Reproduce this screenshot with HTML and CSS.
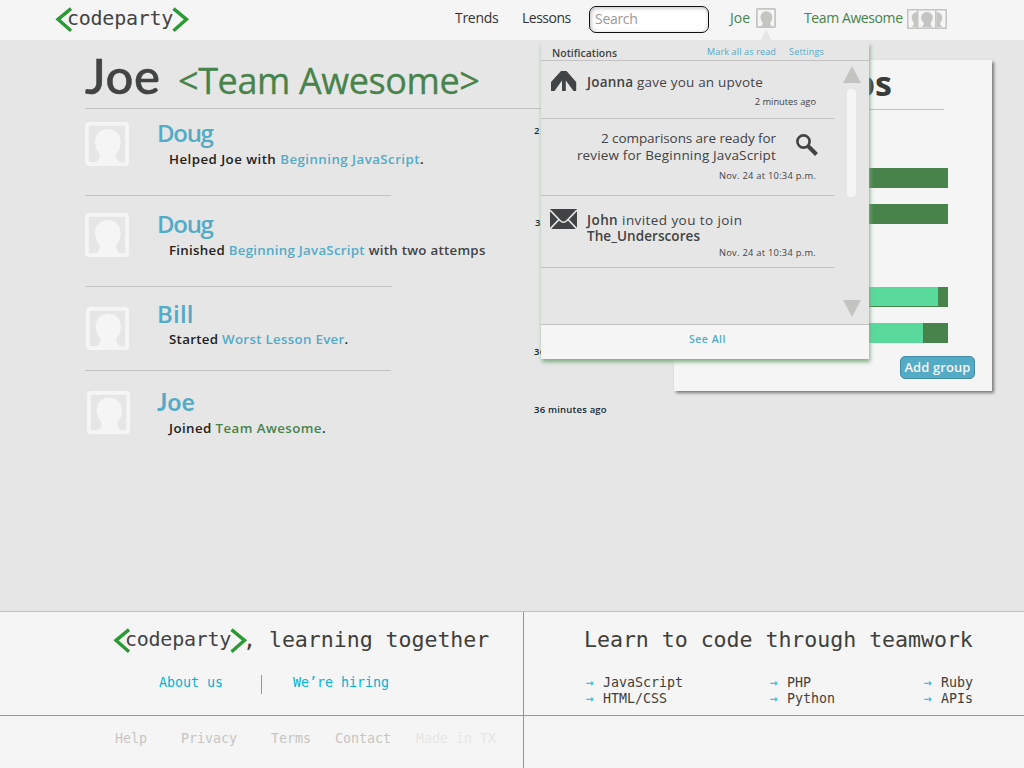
FILE: index.html
```html
<!DOCTYPE html>
<html lang="en">
<head>
<meta charset="utf-8">
<title>codeparty</title>
<link rel="stylesheet" href="styles.css">
</head>
<body>
<svg class="defs" width="0" height="0">
  <symbol id="logo" viewBox="0 0 137 28">
    <path d="M18 3.6 5 14.400 18 25.800M120.500 3.600 133.500 14.400 120.500 25.800" fill="none" stroke="#2b9a35" stroke-width="3.4"/>
  </symbol>
  <symbol id="person" viewBox="0 0 44 44">
    <rect x="1.900" y="1.900" width="40.200" height="40.200" rx="2" fill="none" stroke="currentColor" stroke-width="3.800"/>
    <path d="M22.500 7C29 7 34 11 35 16C36 19 36 22 35 24C35 27 34 28.500 32.500 30C31 32 30.500 34 31.500 36C32.500 38.500 34 39.500 36 41H9C12 39.500 13.500 38.500 14.500 36C15.300 34 14.500 31.500 13 29.500C11.500 28 11 26.500 11 24C9.500 22 9.800 19 10.500 16C12 11 16.500 7 22.500 7Z" fill="currentColor"/>
  </symbol>
</svg>

<header class="topbar">
  <div class="logo"><svg class="logo-marks"><use href="#logo"/></svg><span class="logo-word">codeparty</span></div>
  <nav class="nav">
    <a class="nav-link trends">Trends</a>
    <a class="nav-link lessons">Lessons</a>
    <input class="search" placeholder="Search">
    <a class="nav-link user">Joe</a>
    <svg class="user-icon"><use href="#person"/></svg>
    <a class="nav-link team">Team Awesome</a>
    <svg class="team-icon" viewBox="0 0 40 20">
      <g fill="none" stroke="#c4c4c2" stroke-width="1.500"><path d="M11 .8H.8V19.200H11M29 .8H39.200V19.200H29"/><rect x="10.800" y=".8" width="18" height="18.400"/></g>
      <g fill="#c4c4c2"><path d="M10 3C6.500 3.500 4.500 6 4.700 9 5 12 7 13 7 15L5 18H10Z"/><path d="M29.500 3C33 3.500 35.500 6 35.300 9 35 12 33 13 33 15L35 18H29.500Z"/><path d="M20 3C24 3 26 6 25.800 9.500 25.500 12 23.500 13 23.500 15L25 18H15L17 15C17 13 14.500 12 14.200 9.500 14 6 16 3 20 3Z"/></g>
    </svg>
  </nav>
</header>

<main class="main">
  <section class="feed">
    <h1 class="title"><span class="title-name">Joe</span><span class="title-team">&lt;Team Awesome&gt;</span></h1>
    <article class="entry e1">
      <svg class="avatar"><use href="#person"/></svg>
      <div class="entry-body"><h2 class="name">Doug</h2><p class="what w1">Helped Joe with <a>Beginning JavaScript</a>.</p></div>
      <time class="when">2 minutes ago</time>
    </article>
    <article class="entry e2">
      <svg class="avatar"><use href="#person"/></svg>
      <div class="entry-body"><h2 class="name">Doug</h2><p class="what w2">Finished <a>Beginning JavaScript</a> <span class="soft">with two attemps</span></p></div>
      <time class="when">3 minutes ago</time>
    </article>
    <article class="entry e3">
      <svg class="avatar"><use href="#person"/></svg>
      <div class="entry-body"><h2 class="name">Bill</h2><p class="what w3">Started <a>Worst Lesson Ever</a>.</p></div>
      <time class="when">36 minutes ago</time>
    </article>
    <article class="entry e4">
      <svg class="avatar"><use href="#person"/></svg>
      <div class="entry-body"><h2 class="name">Joe</h2><p class="what w4">Joined <a class="green">Team Awesome</a>.</p></div>
      <time class="when">36 minutes ago</time>
    </article>
  </section>

  <aside class="card">
    <h2 class="card-title">Groups</h2>
    <div class="bar b1"></div>
    <div class="bar b2"></div>
    <div class="bar b3"><div class="fill f3"></div></div>
    <div class="bar b4"><div class="fill f4"></div></div>
    <button class="add">Add group</button>
  </aside>
</main>

<section class="popup">
  <header class="popup-head"><b class="popup-title">Notifications</b><a class="mark">Mark all as read</a><a class="settings">Settings</a></header>
  <div class="popup-body">
    <div class="notes">
      <div class="note n1">
        <svg class="note-icon" width="26" height="20" viewBox="0 0 26 20"><path d="M10 0H15.500L25.200 11V20H22.500L14.800 9.500V20H11V9.500L3.500 20H0V11Z" fill="#424344"/></svg>
        <div class="note-text"><p class="t1"><b>Joanna</b> gave you an upvote</p><time>2 minutes ago</time></div>
      </div>
      <div class="note n2">
        <div class="note-text"><p class="t2">2 comparisons are ready for</p><p class="t3">review for Beginning JavaScript</p><time>Nov. 24 at 10:34 p.m.</time></div>
        <svg class="glass" width="24" height="24" viewBox="0 0 24 24"><g fill="none" stroke="#424344"><circle cx="8.500" cy="8.500" r="6.100" stroke-width="2.600"/><path d="M13 13 21.500 21.500" stroke-width="4"/></g></svg>
      </div>
      <div class="note n3">
        <svg class="note-icon" width="27" height="20" viewBox="0 0 27 20"><path d="M0 0H27V20H0Z" fill="#424344"/><path d="M0 1 10 11.500Q13.500 15 17 11.500L27 1M0 20 9 10.500M27 20 18 10.500" fill="none" stroke="#e6e6e6" stroke-width="1.700"/></svg>
        <div class="note-text"><p class="t4"><b>John</b> invited you to join</p><p class="t5"><b>The_Underscores</b></p><time>Nov. 24 at 10:34 p.m.</time></div>
      </div>
    </div>
    <div class="scroll"><i class="up"></i><i class="thumb"></i><i class="down"></i></div>
  </div>
  <footer class="popup-foot"><a>See All</a></footer>
</section>

<footer class="footer">
  <div class="cell about">
    <div class="tagline"><div class="logo"><svg class="logo-marks"><use href="#logo"/></svg><span class="logo-word">codeparty</span></div><span class="big rest">, learning together</span></div>
    <div class="links"><a>About us</a><a class="hiring">We’re hiring</a></div>
  </div>
  <div class="cell learn">
    <div class="big">Learn to code through teamwork</div>
    <div class="topics">
      <ul><li>JavaScript</li><li>HTML/CSS</li></ul>
      <ul><li>PHP</li><li>Python</li></ul>
      <ul><li>Ruby</li><li>APIs</li></ul>
    </div>
  </div>
  <div class="cell legal"><a class="l1">Help</a><a class="l2">Privacy</a><a class="l3">Terms</a><a class="l4">Contact</a><span class="made">Made in TX</span></div>
  <div class="cell"></div>
</footer>
</body>
</html>
```
FILE: styles.css
```css
* { box-sizing: border-box; margin: 0; padding: 0; }
body { width: 1024px; height: 768px; overflow: hidden; background: #e6e6e6; color: #424344; font-family: "Trebuchet MS", "Open Sans", sans-serif; white-space: nowrap; position: relative; display: flex; flex-direction: column; }
.defs { position: absolute; }
.topbar { height: 40px; background: #f5f5f5; display: flex; padding-left: 53px; }
.logo { display: grid; width: 137px; height: 28px; margin-top: 5px; }
.logo > * { grid-area: 1 / 1; }
.logo-marks { width: 137px; height: 28px; }
.logo-word { font: 20px/24px "DejaVu Sans Mono", monospace; letter-spacing: -0.25px; color: #424344; padding-left: 14px; margin-top: 1px; }
.nav { display: flex; height: 40px; margin-left: 265px; }
.nav-link { font-size: 14px; line-height: 20px; color: #333; }
.trends { width: 67px; margin-top: 8px; letter-spacing: -.3px; }
.lessons { width: 67px; margin-top: 8px; letter-spacing: -.5px; }
.search { width: 120px; height: 27px; margin-top: 6px; border: 1px solid #111; border-radius: 7px; background: #fff; box-shadow: inset 1px 1px 4px #bbb; font: 14px "Open Sans", sans-serif; letter-spacing: -.3px; padding: 0 4px 3px 5px; }
.search::placeholder { color: #999; opacity: 1; }
.user { width: 26px; margin: 8px 0 0 21px; }
.user.nav-link, .team.nav-link { color: #47834a; }
.user-icon { width: 20px; height: 20px; margin: 8px 28px 0 0; color: #c4c4c2; }
.team { width: 103px; margin-top: 8px; letter-spacing: -.4px; }
.team-icon { width: 40px; height: 20px; margin-top: 9px; }
.main { flex: none; height: 571px; display: flex; justify-content: space-between; padding-right: 32px; }
.feed { width: 585px; padding-left: 85px; }
.title { height: 69px; border-bottom: 1px solid #c3c3c3; font-weight: 500; line-height: 70px; width: 500px; display: flex; align-items: baseline; }
.title-name { width: 93px; font: 500 49px/70px Lato, sans-serif; letter-spacing: .6px; -webkit-text-stroke: .5px #424344; }
.title-team { font-size: 36px; color: #47834a; letter-spacing: -.4px; -webkit-text-stroke: .3px #47834a; }
.entry { display: grid; grid-template-columns: 72px 377px auto; }
.entry::after { content: ""; width: 306px; border-bottom: 1px solid #c3c3c3; grid-column: 1 / 3; align-self: end; }
.e1 { height: 87px; grid-template-rows: 86px 1px; }
.e2 { height: 91px; grid-template-rows: 90px 1px; }
.e2::after { margin-left: 1px; }
.e3 { height: 84px; grid-template-rows: 83px 1px; }
.e4::after { display: none; }
.avatar { width: 44px; height: 44px; color: #f5f5f5; margin-top: 13px; }
.e2 .avatar { margin-top: 17px; }
.e3 .avatar { margin: 20px 0 0 1px; width: 43px; height: 43px; }
.e4 .avatar { margin: 20px 0 0 2px; width: 43px; height: 43px; }
.name { font-size: 24px; line-height: 30px; font-weight: 600; color: #53abc6; letter-spacing: -1.300px; padding-top: 9px; }
.e2 .name { padding-top: 13px; }
.e3 .name { padding-top: 12px; letter-spacing: .2px; }
.e4 .name { padding-top: 16px; font-family: Lato, sans-serif; font-weight: 700; letter-spacing: .5px; }
.what { font-size: 13.300px; line-height: 20px; font-weight: 600; color: #24221a; padding-left: 12px; margin-top: 1px; letter-spacing: .3px; }
.w1 { letter-spacing: .45px; }
.w2 { letter-spacing: .27px; }
.w4 { letter-spacing: .42px; }
.what a { color: #53abc6; }
.e3 .what { margin-top: 0; }
.what .green { color: #47834a; }
.soft { color: #424344; }
.when { font-size: 9.5px; line-height: 14px; font-weight: 600; color: #0d2b3b; padding-top: 15px; letter-spacing: .2px; }
.e2 .when { padding: 20px 0 0 1px; }
.e3 .when { padding-top: 58px; }
.e4 .when { padding-top: 32px; }
.card { width: 318px; height: 331px; margin-top: 20px; background: #f5f5f5; box-shadow: 2px 2px 3px #777; display: flex; flex-direction: column; }
.card-title { height: 50px; margin: 0 48px 0 46px; padding-right: 52px; border-bottom: 1px solid #c3c3c3; font-size: 34px; line-height: 47px; text-align: right; color: #3b3b38; }
.bar { flex: none; height: 20px; margin: 0 44px 0 46px; background: #47834a; }
.b1 { margin-top: 58px; }
.b2 { margin-top: 16px; }
.b3 { margin-top: 63px; }
.b4 { margin-top: 16px; }
.fill { height: 20px; background: #5ad99c; }
.f3 { width: 218px; height: 19px; }
.f4 { width: 203px; }
.add { width: 75px; height: 23px; margin: 13px 17px 0 auto; background: #53abc6; border: 1px solid #438ca3; border-radius: 5px; color: #f5f5f5; font: 600 13px/20px "Open Sans", sans-serif; padding-bottom: 1px; letter-spacing: .1px; }
.popup { position: absolute; left: 541px; top: 42px; width: 328px; height: 317px; background: #e6e6e6; box-shadow: 1px 3px 4px #7fae83; display: flex; flex-direction: column; }
.popup::before { content: ""; position: absolute; left: 219px; top: -13px; border: 6px solid transparent; border-top: 0; border-bottom: 12px solid #e6e6e6; }
.popup::after { content: ""; position: absolute; left: -5px; right: -5px; top: -2px; height: 4px; background: #e6e6e6; }
.popup-head { height: 19px; border-bottom: 1px solid #c3c3c3; display: flex; font-size: 9px; line-height: 17px; }
.popup-title { width: 155px; margin-left: 11px; font-size: 10.5px; line-height: 22px; font-weight: 600; }
.popup-head a { color: #53abc6; line-height: 19px; letter-spacing: .15px; }
.mark { width: 82px; }
.popup-head .settings { letter-spacing: .2px; }
.popup-body { height: 264px; display: flex; border-bottom: 1px solid #c3c3c3; }
.notes { width: 293px; }
.note { display: flex; border-bottom: 1px solid #c3c3c3; font-size: 13.500px; }
.note p { line-height: 17px; }
.note b { font-weight: 600; }
.note time { display: block; font-size: 9.3px; line-height: 13px; text-align: right; letter-spacing: .27px; }
.t1 { letter-spacing: .2px; }
.t2 { letter-spacing: -.08px; }
.t3 { letter-spacing: .17px; }
.t4 { letter-spacing: .42px; }
.t5 { letter-spacing: .07px; }
.n1 { height: 58px; padding: 10px 18px 0 10px; }
.n1 .note-text { margin-left: 10px; padding-top: 3px; }
.n1 time { margin-top: 4px; letter-spacing: 0; }
.n2 { height: 77px; padding: 11px 15px 0 10px; justify-content: flex-end; }
.n2 p { text-align: right; }
.note-text { flex: 1; }
.n2 .note-text { width: 225px; flex: none; }
.n2 time { margin: 5px -40px 0 0; }
.glass { margin: 3px 0 0 19px; }
.n3 { height: 72px; padding: 13px 18px 0 9px; }
.n3 .note-text { margin-left: 10px; padding-top: 3px; }
.n3 p { line-height: 16px; }
.n3 time { margin-top: 2px; }
.scroll { width: 35px; padding: 5px 0 7px 8px; display: flex; flex-direction: column; }
.up { border: 9.5px solid transparent; border-top: 0; border-bottom: 17px solid #c3c3c1; width: 0; margin-left: 1px; }
.thumb { width: 9px; height: 108px; margin: 6px 0 auto 5px; border-radius: 4px; background: #f5f5f5; }
.down { border: 9.5px solid transparent; border-bottom: 0; border-top: 17px solid #c3c3c1; width: 0; margin-left: 1px; }
.popup-foot { flex: 1; background: #f5f5f5; text-align: center; font-size: 10.500px; font-weight: 600; line-height: 29px; padding-left: 5px; color: #53abc6; letter-spacing: .5px; }
.footer { height: 157px; display: grid; grid-template-columns: 524px 500px; grid-template-rows: 104px 52px; border-top: 1px solid #c3c3c3; background: #f5f5f5; font: 13.3px/16px "DejaVu Sans Mono", monospace; color: #3f3f3b; }
.cell:nth-child(odd) { border-right: 1px solid #969696; }
.about, .learn { border-bottom: 1px solid #969696; }
.big { font-size: 21.6px; line-height: 30px; letter-spacing: -.04px; }
.about { padding: 9px 0 0 111px; }
.tagline { display: flex; height: 46px; }
.tagline .logo { flex: none; margin-top: 5px; }
.rest { margin-left: -5px; margin-top: 4px; }
.links { display: flex; margin-left: 48px; padding-top: 8px; color: #00b3d7; }
.links a:first-child { width: 103px; height: 19px; border-right: 1px solid #969696; }
.hiring { padding-left: 31px; }
.learn { padding: 13px 0 0 60px; }
.topics { display: flex; margin: 20px 0 0 1px; }
ul { list-style: none; flex: none; width: 184px; }
ul:nth-child(2) { width: 154px; }
ul:nth-child(3) { width: 60px; }
li { height: 16px; display: flex; }
li::before { content: "→"; width: 17px; color: #45bbdc; padding-left: 1px; font-weight: 700; }
.legal { display: flex; padding: 15px 0 0 115px; color: #c5c5c3; }
.l1 { width: 66px; }
.l2 { width: 90px; }
.l3 { width: 64px; }
.l4 { width: 81px; }
.made { color: #e6e6e4; }
```
